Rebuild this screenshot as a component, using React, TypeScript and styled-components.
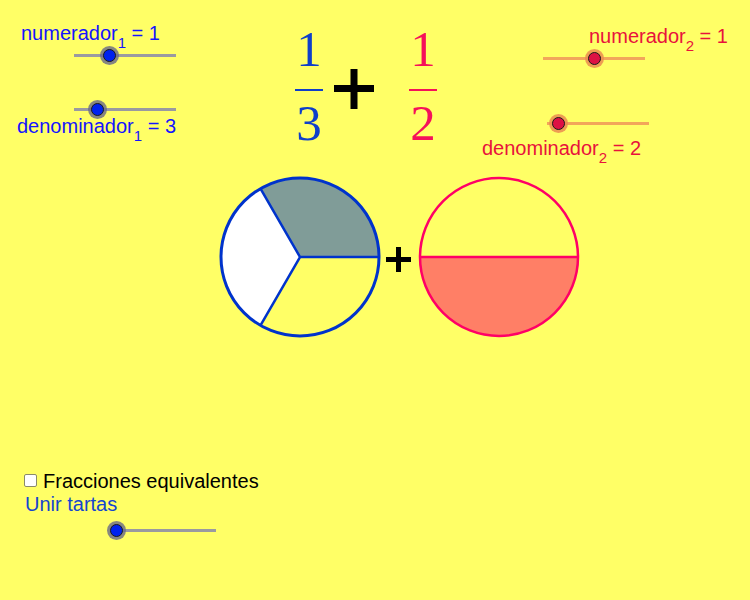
import React from 'react';
import styled, { createGlobalStyle } from 'styled-components';

const Global = createGlobalStyle`
    html, body {
        margin: 0;
        padding: 0;
        background: #ffff66;
    }
`;

const BLUE_TEXT = '#1414ff';
const RED_TEXT = '#e8123c';
const BLUE_FRAC = '#0f3fca';
const RED_FRAC = '#f5115a';

// the applet is a free canvas (GeoGebra style): objects sit at their own coordinates
const Canvas = styled.div`
    position: relative;
    width: 750px;
    height: 600px;
    background: #ffff66;
    overflow: hidden;
    font-family: 'Liberation Sans', Arial, sans-serif;
`;

const Label = styled.div<{ $color: string }>`
    color: ${p => p.$color};
    font-size: 20px;
    white-space: nowrap;
    line-height: 20px;

    sub {
        font-size: 15px;
        vertical-align: -8px;
        line-height: 0;
    }
`;

const Placed = styled.div<{ $x: number; $y: number }>`
    position: absolute;
    left: ${p => p.$x}px;
    top: ${p => p.$y}px;
`;

const Track = styled.div<{ $w: number; $color: string }>`
    position: relative;
    width: ${p => p.$w}px;
    height: 3px;
    background: ${p => p.$color};
`;

const Knob = styled.span<{ $at: number; $fill: string; $halo: string }>`
    position: absolute;
    left: ${p => p.$at - 9.5}px;
    top: -8px;
    width: 19px;
    height: 19px;
    border-radius: 50%;
    background: ${p => p.$halo};
    display: flex;
    align-items: center;
    justify-content: center;

    &::after {
        content: '';
        width: 11px;
        height: 11px;
        border-radius: 50%;
        background: ${p => p.$fill};
        border: 1px solid #1a1a1a;
    }
`;

type SliderProps = { x: number; y: number; w: number; knob: number; kind: 'blue' | 'red' };

// slider on the canvas: x,y is the left end of the track, knob is the knob's x
function Slider({ x, y, w, knob, kind }: SliderProps) {
    const track = kind === 'blue' ? '#9a9aa0' : '#f2a65a';
    const fill = kind === 'blue' ? '#0022ee' : '#dd1144';
    const halo = kind === 'blue' ? 'rgba(105,105,135,0.8)' : 'rgba(235,140,80,0.85)';
    return (
        <Placed $x={x} $y={y - 1.5}>
            <Track $w={w} $color={track}>
                <Knob $at={knob - x} $fill={fill} $halo={halo} />
            </Track>
        </Placed>
    );
}

const Expression = styled.div`
    position: absolute;
    left: 295px;
    top: 28.5px;
    display: flex;
    align-items: flex-start;
`;

const Fraction = styled.div<{ $color: string }>`
    width: 28px;
    display: flex;
    flex-direction: column;
    align-items: center;
    color: ${p => p.$color};
    font-family: 'Liberation Serif', 'DejaVu Serif', serif;
    font-size: 51px;
    line-height: 40px;
`;

const Digit = styled.span`
    display: block;
    height: 40px;
`;

const Bar = styled.span<{ $color: string }>`
    display: block;
    width: 28px;
    height: 2px;
    background: ${p => p.$color};
    margin: 20.5px 0 12px;
`;

const BigPlus = styled.svg`
    margin: 40.5px 35px 0 11px;
`;

const Pies = styled.div`
    position: absolute;
    left: 219px;
    top: 176px;
    display: flex;
    align-items: center;
`;

const SmallPlus = styled.svg`
    margin: 4px 6.5px 0 5px;
`;

const Controls = styled.div`
    position: absolute;
    left: 24px;
    top: 471px;
    display: flex;
    flex-direction: column;
    gap: 3px;
`;

const CheckRow = styled.label`
    display: flex;
    align-items: flex-start;
    gap: 6px;
    font-size: 20px;
    line-height: 20px;
    color: #000;
`;

const Box = styled.span`
    margin-top: 3px;
    width: 11px;
    height: 11px;
    border: 1px solid #8a8a6a;
    border-radius: 2px;
    background: #fff;
`;

const Indented = styled.div`
    padding-left: 1px;
`;

function ThirdsPie() {
    const c = 81, r = 79;
    const a = (120 * Math.PI) / 180;
    const px = c + r * Math.cos(a);
    const py = c - r * Math.sin(a);
    const qy = c + r * Math.sin(a);
    return (
        <svg width="162" height="162" viewBox="0 0 162 162">
            <path d={`M${c} ${c} L${c + r} ${c} A${r} ${r} 0 0 0 ${px} ${py} Z`} fill="#809c98" />
            <path d={`M${c} ${c} L${px} ${py} A${r} ${r} 0 0 0 ${px} ${qy} Z`} fill="#ffffff" />
            <circle cx={c} cy={c} r={r} fill="none" stroke="#0033cc" strokeWidth="3" />
            <path
                d={`M${c + r} ${c} L${c} ${c} L${px} ${py} M${c} ${c} L${px} ${qy}`}
                stroke="#0033cc"
                strokeWidth="2.5"
                fill="none"
            />
        </svg>
    );
}

function HalvesPie() {
    const c = 81, r = 79;
    return (
        <svg width="162" height="162" viewBox="0 0 162 162">
            <path d={`M${c - r} ${c} A${r} ${r} 0 0 0 ${c + r} ${c} Z`} fill="#ff7f66" />
            <circle cx={c} cy={c} r={r} fill="none" stroke="#ff0066" strokeWidth="2.5" />
            <path d={`M${c - r} ${c} H${c + r}`} stroke="#ff0066" strokeWidth="2.5" />
        </svg>
    );
}

export default function App() {
    return (
        <Canvas>
            <Global />

            <Placed $x={21} $y={23}>
                <Label $color={BLUE_TEXT}>numerador<sub>1</sub> = 1</Label>
            </Placed>
            <Slider x={74} y={55} w={102} knob={109} kind="blue" />
            <Slider x={74} y={109} w={102} knob={97} kind="blue" />
            <Placed $x={17} $y={116}>
                <Label $color={BLUE_TEXT}>denominador<sub>1</sub> = 3</Label>
            </Placed>

            <Placed $x={589} $y={26}>
                <Label $color={RED_TEXT}>numerador<sub>2</sub> = 1</Label>
            </Placed>
            <Slider x={543} y={58} w={102} knob={594} kind="red" />
            <Slider x={547} y={123} w={102} knob={558} kind="red" />
            <Placed $x={482} $y={138}>
                <Label $color={RED_TEXT}>denominador<sub>2</sub> = 2</Label>
            </Placed>

            <Expression>
                <Fraction $color={BLUE_FRAC}>
                    <Digit>1</Digit>
                    <Bar $color={BLUE_FRAC} />
                    <Digit>3</Digit>
                </Fraction>
                <BigPlus width="40" height="40" viewBox="0 0 40 40">
                    <path d="M0 19.5 H40 M20 0 V40" stroke="#000" strokeWidth="7" />
                </BigPlus>
                <Fraction $color={RED_FRAC}>
                    <Digit>1</Digit>
                    <Bar $color={RED_FRAC} />
                    <Digit>2</Digit>
                </Fraction>
            </Expression>

            <Pies>
                <ThirdsPie />
                <SmallPlus width="25" height="25" viewBox="0 0 25 25">
                    <path d="M0 12.5 H25 M12.5 0 V25" stroke="#000" strokeWidth="5" />
                </SmallPlus>
                <HalvesPie />
            </Pies>

            <Controls>
                <CheckRow>
                    <Box />
                    Fracciones equivalentes
                </CheckRow>
                <Indented>
                    <Label $color="#1445d0">Unir tartas</Label>
                </Indented>
            </Controls>
            <Slider x={116} y={530} w={100} knob={116} kind="blue" />
        </Canvas>
    );
}
